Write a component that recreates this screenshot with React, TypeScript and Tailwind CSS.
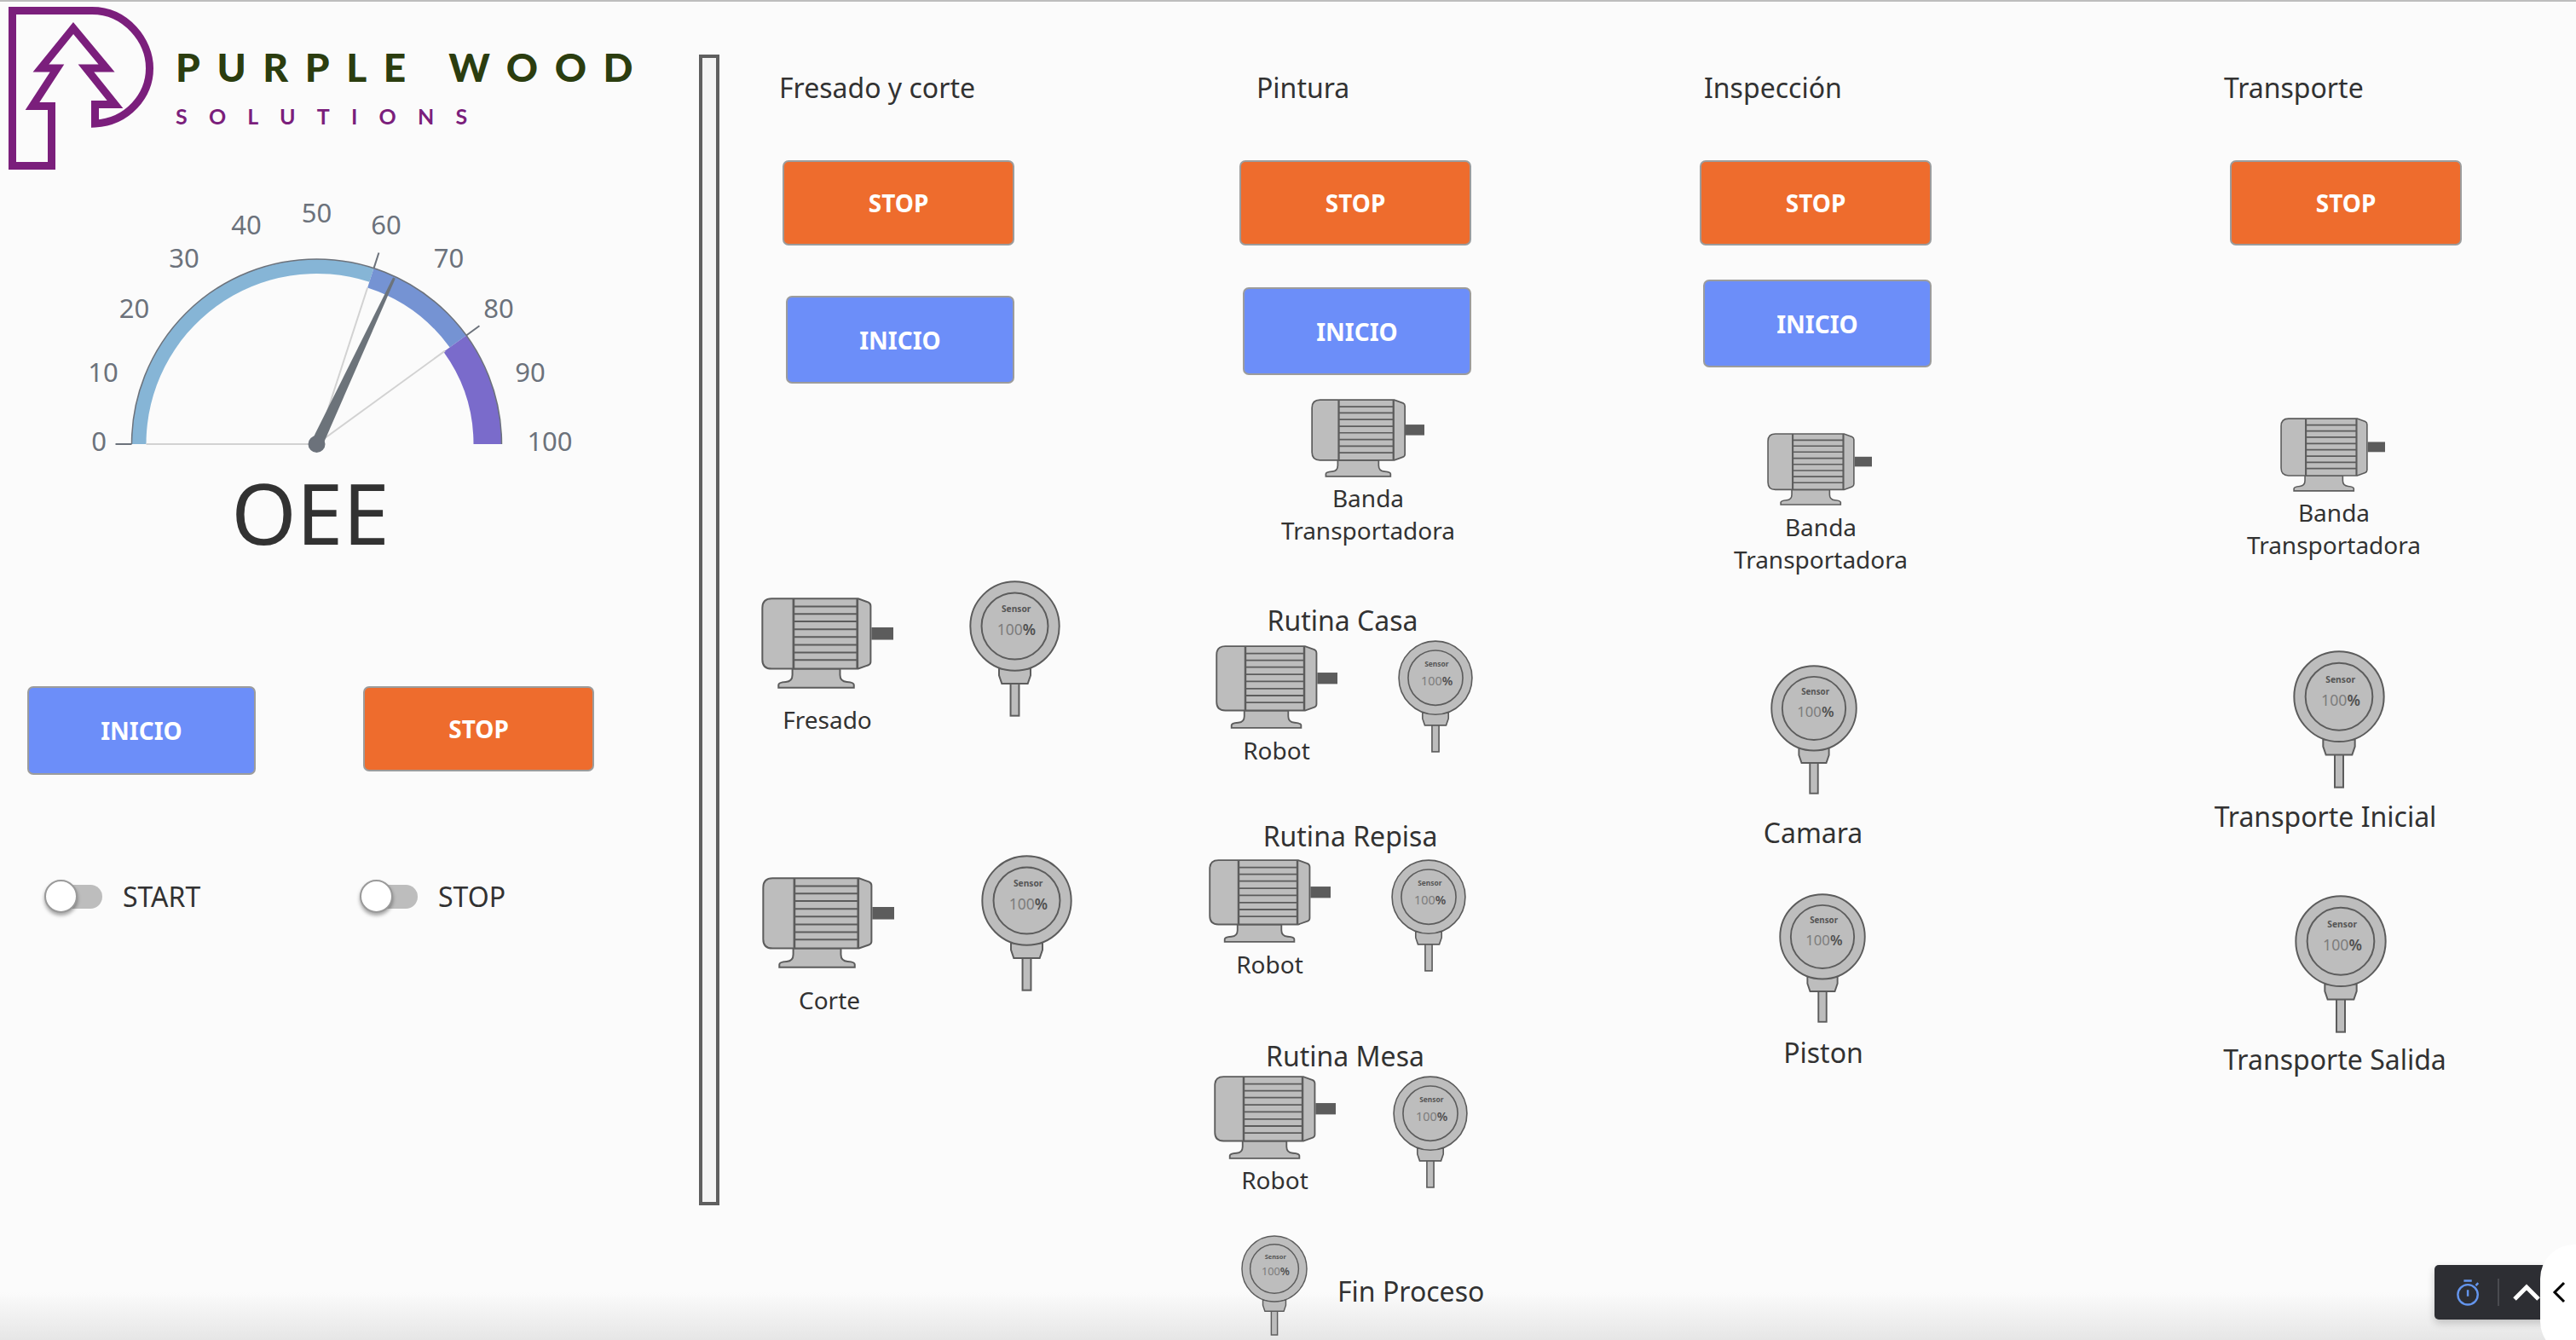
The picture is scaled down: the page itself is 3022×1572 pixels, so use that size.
import React from "react";

const C = { x: 371.5, y: 521 };
function polar(v: number, r: number) {
  const a = ((180 - 1.8 * v) * Math.PI) / 180;
  return { x: C.x + r * Math.cos(a), y: C.y - r * Math.sin(a) };
}
function band(v0: number, v1: number, rIn: number, rOut: number) {
  const a = polar(v0, rOut);
  const b = polar(v1, rOut);
  const c = polar(v1, rIn);
  const d = polar(v0, rIn);
  return `M${a.x} ${a.y} A${rOut} ${rOut} 0 0 1 ${b.x} ${b.y} L${c.x} ${c.y} A${rIn} ${rIn} 0 0 0 ${d.x} ${d.y} Z`;
}

const labels: [string, number, number][] = [
  ["0", 116, 518], ["10", 121, 437], ["20", 157.5, 362], ["30", 216, 303], ["40", 289, 264], ["50", 371.5, 250],
  ["60", 453, 264], ["70", 526.5, 303], ["80", 585, 362], ["90", 622, 437], ["100", 645, 518],
];

function Gauge() {
  const outerA = polar(0, 217);
  const outerB = polar(100, 217);
  const tip = polar(63.9, 215);
  const dx = tip.x - C.x;
  const dy = tip.y - C.y;
  const len = Math.hypot(dx, dy);
  const nx = -dy / len;
  const ny = dx / len;
  const needle = [
    [C.x + nx * 7, C.y + ny * 7],
    [tip.x + nx * 1.5, tip.y + ny * 1.5],
    [tip.x - nx * 1.5, tip.y - ny * 1.5],
    [C.x - nx * 7, C.y - ny * 7],
  ].map((p) => p.join(",")).join(" ");
  return (
    <svg viewBox="80 220 640 470" className="w-[640px] h-[470px] ml-[80px] mt-[18px] shrink-0">
      <path d={band(0, 60, 200, 217)} fill="#86b5d6" />
      <path d={band(60, 80, 193, 217)} fill="#7593d3" />
      <path d={band(80, 100, 184, 217)} fill="#7a6bcb" />
      <path d={`M${outerA.x} ${outerA.y} A217 217 0 0 1 ${outerB.x} ${outerB.y}`} fill="none" stroke="#6c727b" strokeWidth="1.5" />
      {[0, 60, 80].map((v) => {
        const p = polar(v, 236);
        const q = polar(v, 217);
        const inner = polar(v, v === 0 ? 200 : v === 60 ? 193 : 186);
        return (
          <g key={v}>
            <line x1={p.x} y1={p.y} x2={q.x} y2={q.y} stroke="#6c727b" strokeWidth="2" />
            <line x1={inner.x} y1={inner.y} x2={C.x} y2={C.y} stroke="#d2d2d2" strokeWidth="2" />
          </g>
        );
      })}
      <polygon points={needle} fill="#6c737a" />
      <circle cx={C.x} cy={C.y} r="10" fill="#6c727b" />
      {labels.map(([t, x, y]) => (
        <text key={t} x={x} y={y + 11} textAnchor="middle" fontSize="31" fill="#6c727b" className="font-['Noto_Sans']">
          {t}
        </text>
      ))}
      <text x="364" y="639" textAnchor="middle" fontSize="98" fill="#323232" className="font-['Noto_Sans']">
        OEE
      </text>
    </svg>
  );
}

function Logo() {
  return (
    <div className="flex h-[200px] shrink-0">
      <svg viewBox="0 2 180 200" className="w-[180px] h-[200px] shrink-0">
        <path
          d="M60.5 194.5 H14.5 V12.5 H108 C148 12.5 175.5 48 175.5 80 C175.5 112 150 143 111.5 145 V122.5 H135 L101 80 H125 L86 33 L48 80 H67 L38 124.5 H60.5 Z"
          fill="none"
          stroke="#7b1f7c"
          strokeWidth="9"
          strokeMiterlimit="4"
        />
      </svg>
      <div className="ml-[26px] flex flex-col">
        <div className="mt-[54px] h-[46px] leading-[46px] text-[46px] font-black tracking-[19.6px] whitespace-nowrap text-[#2b3d0f] font-['Lato']">
          PURPLE WOOD
        </div>
        <div className="mt-[19px] h-[30px] leading-[30px] text-[25px] font-bold tracking-[25.2px] whitespace-nowrap text-[#7b1f7c] font-['Lato']">
          SOLUTIONS
        </div>
      </div>
    </div>
  );
}

function Motor({ className }: { className: string }) {
  return (
    <svg viewBox="38 90 466 324" preserveAspectRatio="none" className={`block shrink-0 ${className}`}>
      <path d="M148 343 V365 Q148 388 125 390 Q99 392 99 400 V410 H365 V400 Q365 392 340 390 Q316 388 316 365 V343 Z" fill="#bdbdbd" stroke="#5c5c5c" strokeWidth="6" />
      <path d="M75 94 H380 L416 107 Q424 111 424 120 V318 Q424 327 416 330 L380 343 H75 Q42 343 42 310 V127 Q42 94 75 94 Z" fill="#bdbdbd" stroke="#5c5c5c" strokeWidth="6" />
      <line x1="152" y1="94" x2="152" y2="343" stroke="#5c5c5c" strokeWidth="8" />
      <line x1="377" y1="94" x2="377" y2="343" stroke="#5c5c5c" strokeWidth="8" />
      {[122, 148, 175, 203, 230, 258, 285, 312].map((y) => (
        <line key={y} x1="152" y1={y} x2="377" y2={y} stroke="#5c5c5c" strokeWidth="6" />
      ))}
      <rect x="427" y="196" width="77" height="44" fill="#5c5c5c" />
    </svg>
  );
}

function Sensor({ className }: { className: string }) {
  return (
    <svg viewBox="768 28 324 484" preserveAspectRatio="none" className={`block shrink-0 ${className}`}>
      <rect x="915" y="392" width="30" height="116" fill="#bdbdbd" stroke="#5c5c5c" strokeWidth="6" />
      <path d="M874 340 V365 L884 394 H976 L986 365 V340 Z" fill="#bdbdbd" stroke="#5c5c5c" strokeWidth="6" />
      <circle cx="930" cy="190" r="158" fill="#bdbdbd" stroke="#5c5c5c" strokeWidth="6" />
      <circle cx="930" cy="190" r="118" fill="#bdbdbd" stroke="#5c5c5c" strokeWidth="6" />
      <text x="935" y="141" textAnchor="middle" fontSize="31" fontWeight="700" fill="#555555" className="font-['Noto_Sans']">
        Sensor
      </text>
      <text x="936" y="222" textAnchor="middle" fontSize="53" fill="#7c7c7c" className="font-['Noto_Sans']">
        100<tspan fill="#505050" fontWeight="600">%</tspan>
      </text>
    </svg>
  );
}

function Btn({ label, className }: { label: string; className: string }) {
  return (
    <div className={`flex shrink-0 items-center justify-center rounded-[7px] border-2 border-[#9c9c9c] text-[28px] font-bold text-white ${className}`}>
      {label}
    </div>
  );
}

function Stop({ className }: { className: string }) {
  return <Btn label="STOP" className={`bg-[#ee6c2d] w-[272px] h-[100px] ${className}`} />;
}
function Inicio({ className }: { className: string }) {
  return <Btn label="INICIO" className={`bg-[#6c8ef9] w-[268px] h-[103px] ${className}`} />;
}

function Title({ children, className }: { children: React.ReactNode; className: string }) {
  return <div className={`h-[40px] leading-[40px] text-[32px] whitespace-nowrap text-[#323232] ${className}`}>{children}</div>;
}

function Label({ children, className }: { children: React.ReactNode; className: string }) {
  return <div className={`w-[300px] text-center text-[28px] leading-[38px] text-[#323232] shrink-0 ${className}`}>{children}</div>;
}

function Head({ children, className }: { children: React.ReactNode; className: string }) {
  return <div className={`w-[300px] h-[38px] text-center text-[32px] leading-[38px] text-[#323232] whitespace-nowrap shrink-0 ${className}`}>{children}</div>;
}

function Toggle({ label, className }: { label: string; className: string }) {
  return (
    <div className={`flex items-center shrink-0 ${className}`}>
      <div className="relative w-[68px] h-[39px] shrink-0">
        <div className="absolute left-[10px] top-[6px] w-[58px] h-[28px] rounded-full bg-[#bdbdbd]" />
        <div className="absolute left-0 top-0 w-[39px] h-[39px] rounded-full bg-white border-2 border-[#9a9a9a] shadow-[0_3px_4px_rgba(0,0,0,0.35)]" />
      </div>
      <span className="ml-[24px] text-[32px] leading-[39px] text-[#323232]">{label}</span>
    </div>
  );
}

export default function App() {
  return (
    <div className="relative w-[3022px] h-[1572px] overflow-hidden flex flex-col bg-[#fbfbfb] font-['Noto_Sans',sans-serif]">
      {/* Bottom shade */}
      <div className="absolute left-0 right-0 bottom-0 h-[56px] bg-gradient-to-b from-transparent to-[#e6e6e6] pointer-events-none" />

      <div className="relative h-[2px] bg-[#bdbdbd] shrink-0" />
      <div className="relative flex flex-1 min-h-0">
        {/* Left panel */}
        <div className="w-[820px] shrink-0 flex flex-col">
          <Logo />
          <Gauge />
          <div className="flex items-start mt-[115px] ml-[32px]">
            <Btn label="INICIO" className="bg-[#6c8ef9] w-[268px] h-[104px]" />
            <Btn label="STOP" className="bg-[#ee6c2d] w-[271px] h-[100px] ml-[126px]" />
          </div>
          <div className="flex mt-[123px] ml-[52px]">
            <Toggle label="START" className="w-[370px]" />
            <Toggle label="STOP" className="" />
          </div>
        </div>

        {/* Divider */}
        <div className="w-[24px] h-[1350px] mt-[62px] shrink-0 border-4 border-[#5f5f5f] bg-[#f4f4f4]" />

        {/* Fresado y corte */}
        <div className="w-[556px] shrink-0 flex flex-col">
          <Title className="ml-[70px] mt-[81px]">Fresado y corte</Title>
          <Stop className="ml-[74px] mt-[65px]" />
          <Inicio className="ml-[78px] mt-[59px]" />
          <div className="flex items-start ml-[49px] mt-[231px]">
            <div className="flex flex-col w-[155px] mt-[20px] items-center">
              <Motor className="w-[155px] h-[107px]" />
              <Label className="mt-[17px]">Fresado</Label>
            </div>
            <Sensor className="w-[107px] h-[160px] ml-[89px]" />
          </div>
          <div className="flex items-start ml-[50px] mt-[141px]">
            <div className="flex flex-col w-[155px] mt-[25px] items-center">
              <Motor className="w-[155px] h-[107px]" />
              <Label className="mt-[18px] ml-[3px]">Corte</Label>
            </div>
            <Sensor className="w-[107px] h-[160px] ml-[102px] -mt-[1px]" />
          </div>
        </div>

        {/* Pintura */}
        <div className="w-[560px] shrink-0 flex flex-col">
          <Title className="ml-[74px] mt-[81px]">Pintura</Title>
          <Stop className="ml-[54px] mt-[65px]" />
          <Inicio className="ml-[58px] mt-[49px]" />
          <Motor className="w-[133px] h-[92px] ml-[138px] mt-[28px]" />
          <Label className="ml-[55px] mt-[5px]">Banda<br />Transportadora</Label>
          <Head className="ml-[25px] mt-[68px]">Rutina Casa</Head>
          <div className="flex items-start ml-[26px] mt-[4px]">
            <div className="flex flex-col w-[143px] mt-[6px] items-center">
              <Motor className="w-[143px] h-[98px]" />
              <Label className="mt-[6px]">Robot</Label>
            </div>
            <Sensor className="w-[88px] h-[132px] ml-[71px]" />
          </div>
          <Head className="ml-[34px] mt-[63px]">Rutina Repisa</Head>
          <div className="flex items-start ml-[18px] mt-[8px]">
            <div className="flex flex-col w-[143px] items-center">
              <Motor className="w-[143px] h-[98px]" />
              <Label className="mt-[6px]">Robot</Label>
            </div>
            <Sensor className="w-[88px] h-[132px] ml-[71px]" />
          </div>
          <Head className="ml-[28px] mt-[70px]">Rutina Mesa</Head>
          <div className="flex items-start ml-[24px] mt-[4px]">
            <div className="flex flex-col w-[143px] items-center">
              <Motor className="w-[143px] h-[98px]" />
              <Label className="mt-[5px]">Robot</Label>
            </div>
            <Sensor className="w-[88px] h-[132px] ml-[67px]" />
          </div>
          <div className="flex items-start ml-[56px] mt-[46px]">
            <Sensor className="w-[78px] h-[118px]" />
            <div className="ml-[35px] mt-[47px] h-[38px] leading-[38px] text-[32px] whitespace-nowrap text-[#323232]">Fin Proceso</div>
          </div>
        </div>

        {/* Inspección */}
        <div className="w-[600px] shrink-0 flex flex-col">
          <Title className="ml-[39px] mt-[81px]">Inspección</Title>
          <Stop className="ml-[34px] mt-[65px]" />
          <Inicio className="ml-[38px] mt-[40px]" />
          <Motor className="w-[123px] h-[85px] ml-[113px] mt-[77px]" />
          <Label className="ml-[26px] mt-[6px]">Banda<br />Transportadora</Label>
          <Sensor className="w-[102px] h-[152px] ml-[117px] mt-[105px]" />
          <Head className="ml-[17px] mt-[26px]">Camara</Head>
          <Sensor className="w-[102px] h-[152px] ml-[127px] mt-[52px]" />
          <Head className="ml-[29px] mt-[16px]">Piston</Head>
        </div>

        {/* Transporte */}
        <div className="flex-1 min-w-0 flex flex-col">
          <Title className="ml-[49px] mt-[81px]">Transporte</Title>
          <Stop className="ml-[56px] mt-[65px]" />
          <Motor className="w-[123px] h-[87px] ml-[115px] mt-[202px]" />
          <Label className="ml-[28px] mt-[5px]">Banda<br />Transportadora</Label>
          <Sensor className="w-[108px] h-[162px] ml-[130px] mt-[105px]" />
          <Head className="ml-[18px] mt-[14px]">Transporte Inicial</Head>
          <Sensor className="w-[108px] h-[162px] ml-[132px] mt-[73px]" />
          <Head className="ml-[29px] mt-[12px]">Transporte Salida</Head>
        </div>
      </div>

      {/* Timer widget */}
      <div className="absolute left-[2856px] top-[1484px] w-[150px] h-[64px] rounded-[5px] bg-[#2d2e33] shadow-[0_4px_10px_rgba(0,0,0,0.2)] flex items-center">
        <svg viewBox="0 0 32 34" fill="none" stroke="#6495ed" strokeWidth="2.6" className="w-[30px] h-[32px] ml-[25px] shrink-0">
          <circle cx="15" cy="20" r="12.5" />
          <path d="M10 2.5 H20 M15 14 V22 M25 8.5 L28 5.5" />
        </svg>
        <div className="w-[2px] h-[32px] bg-[#4a4b50] ml-[19px] shrink-0" />
        <svg viewBox="0 0 32 22" fill="none" stroke="#ffffff" strokeWidth="5" className="w-[32px] h-[22px] ml-[16px] shrink-0">
          <path d="M2 19 L16 5 L30 19" />
        </svg>
      </div>
      <div className="absolute left-[2980px] top-[1460px] w-[60px] h-[130px] rounded-l-[40px] bg-white flex items-center">
        <svg viewBox="0 0 16 26" fill="none" stroke="#000000" strokeWidth="3" className="w-[16px] h-[26px] ml-[14px] mb-[18px] shrink-0">
          <path d="M14 2 L3 13 L14 24" />
        </svg>
      </div>
    </div>
  );
}
